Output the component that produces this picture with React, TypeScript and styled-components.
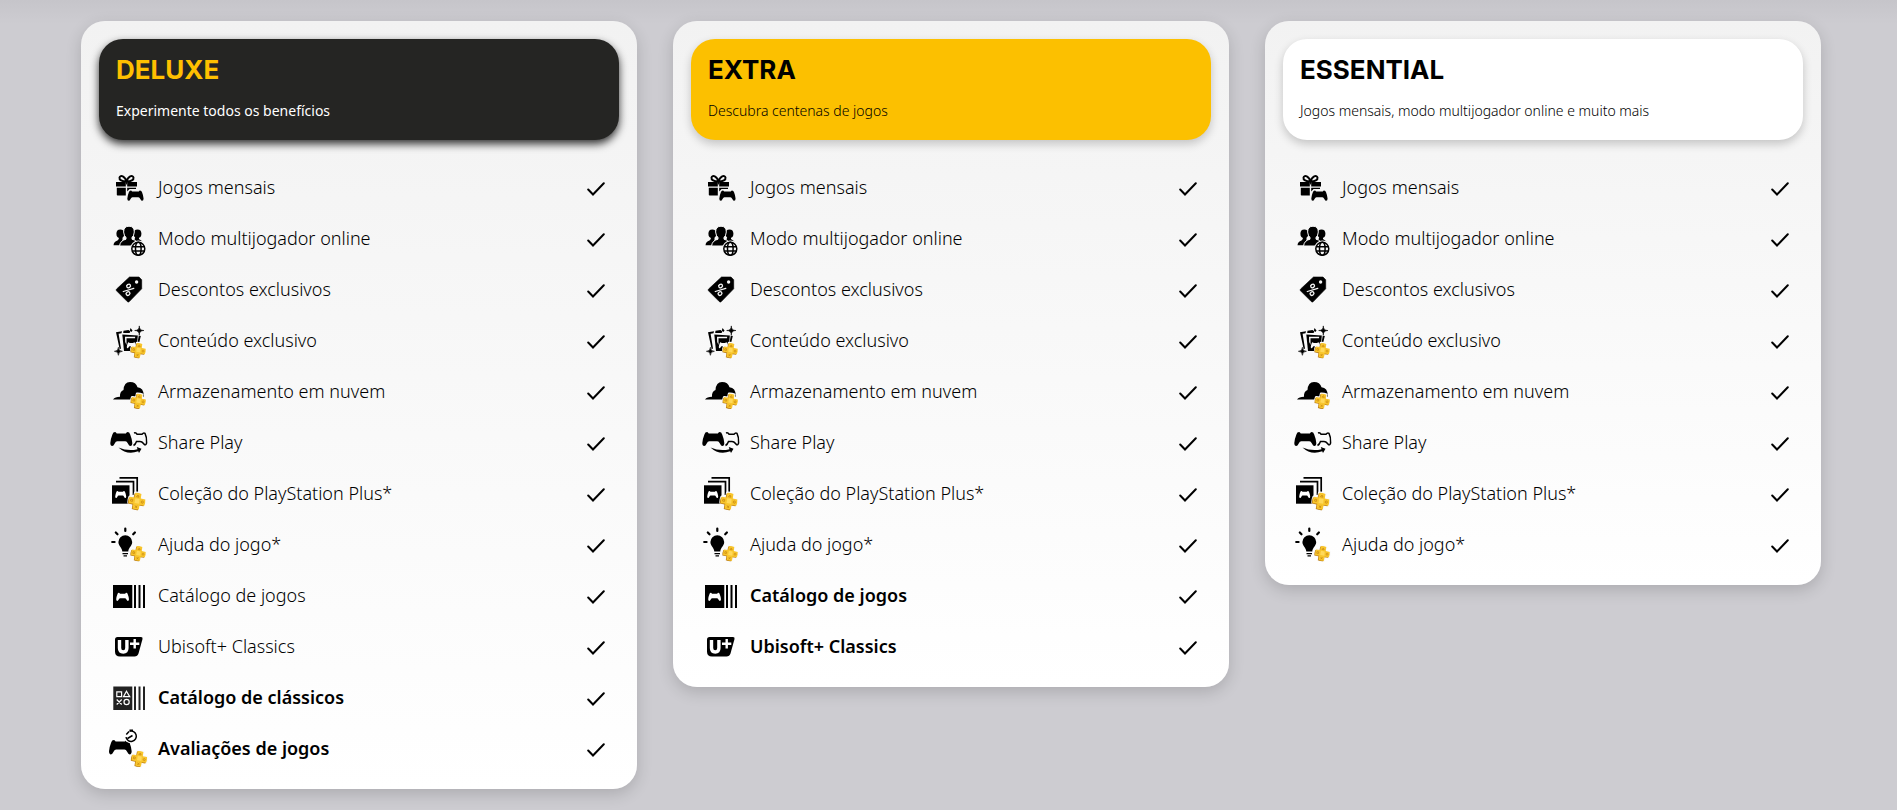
import React from 'react';
import styled, { createGlobalStyle } from 'styled-components';

const GlobalStyle = createGlobalStyle`
  *, *::before, *::after { box-sizing: border-box; }
  body {
    margin: 0;
    min-height: 100vh;
    background: linear-gradient(#c6c5ca 0, #cdccd1 24px);
    background-color: #cdccd1;
    background-repeat: no-repeat;
    font-family: "Noto Sans", "Open Sans", sans-serif;
    color: #000;
  }
`;

const Plans = styled.main`
  display: grid;
  grid-template-columns: repeat(3, 1fr);
  align-items: start;
  gap: 36px;
  padding: 21px 76px 21px 81px;
`;

const Card = styled.section`
  padding: 18px 18px 14px;
  border-radius: 24px;
  background: linear-gradient(#f2f2f2, #fff);
  box-shadow: 0 5px 16px rgba(0, 0, 0, 0.16);
`;

type Tone = 'dark' | 'gold' | 'light';

const tones: Record<Tone, { bg: string; title: string; text: string; weight: number; shadow: string }> = {
  dark: { bg: '#252523', title: '#ffc000', text: '#fff', weight: 400, shadow: '0 4px 8px rgba(0, 0, 0, 0.8)' },
  gold: { bg: '#fcc000', title: '#000', text: '#000', weight: 300, shadow: '0 4px 10px rgba(0, 0, 0, 0.2)' },
  light: { bg: '#fff', title: '#000', text: '#000', weight: 300, shadow: '0 4px 10px rgba(0, 0, 0, 0.2)' },
};

const Banner = styled.header<{ $tone: Tone }>`
  height: 101px;
  padding: 15px 17px;
  border-radius: 24px;
  background: ${p => tones[p.$tone].bg};
  box-shadow: ${p => tones[p.$tone].shadow};

  h2 {
    margin: 0 0 12px;
    font: 700 26px/32px Inter, sans-serif;
    color: ${p => tones[p.$tone].title};
  }

  p {
    margin: 0;
    font-size: 14px;
    line-height: 26px;
    font-weight: ${p => tones[p.$tone].weight};
    color: ${p => tones[p.$tone].text};
  }
`;

const Benefits = styled.ul`
  list-style: none;
  margin: 0;
  padding: 23px 14px 0 9px;
`;

const Benefit = styled.li<{ $strong: boolean }>`
  display: flex;
  align-items: center;
  height: 51px;
  font-size: 18px;
  line-height: 24px;
  font-weight: ${p => (p.$strong ? 600 : 300)};
`;

const Label = styled.span`
  flex: 1;
  margin-left: 9px;
  padding-bottom: 4px;
`;

const Icon = styled.svg`
  flex: none;
  width: 41px;
  height: 41px;
`;

const Tick = styled.svg`
  flex: none;
  width: 18px;
  height: 14px;
`;

const PAD =
  'M4.800 0Q2.800 0 2.100 2.400Q0.400 6.500 0 11Q0 14 1.900 14Q3.200 14 4.400 11.500Q5.400 9.200 7 9.200H15Q16.600 9.200 17.600 11.500Q18.800 14 20.100 14Q22 14 22 11Q21.600 6.500 19.900 2.400Q19.200 0 17.200 0Q16.200 0 15.600 1.500H6.400Q5.800 0 4.800 0Z';

const Pad = ({ x, y, k, fill = '#000' }: { x: number; y: number; k: number; fill?: string }) => (
  <path d={PAD} transform={`translate(${x} ${y}) scale(${k})`} fill={fill} />
);

const CROSS =
  'M-2.900 -7.300Q0 -8 2.900 -7.300L3 -3L7.300 -2.900Q8 0 7.300 2.900L3 3L2.900 7.300Q0 8 -2.900 7.300L-3 3L-7.300 2.900Q-8 0 -7.300 -2.900L-3 -3Z';

const Plus = ({ x, y, k = 1 }: { x: number; y: number; k?: number }) => (
  <g transform={`translate(${x} ${y}) rotate(10) scale(${k})`} strokeLinejoin="round">
    <path d={CROSS} stroke="#fafafa" strokeWidth="2.500" fill="#fafafa" />
    <path d={CROSS} transform="translate(-.6 .7)" fill="#b87a14" />
    <path d={CROSS} fill="#f8c52c" />
    <path d="M-2 -2.500H2L2.500 2H-2Z" fill="#ffd95a" />
    <g fill="none" stroke="#c98a12" strokeWidth=".7">
      <path d="M0 -5.800L1.200 -4H-1.200ZM-1 4.200L1 6.200M1 4.200L-1 6.200M-5.900 -.9H-4.100V.9H-5.900Z" />
      <circle cx="5" cy="0" r="1" />
    </g>
  </g>
);

const star = (x: number, y: number, r: number) =>
  `M${x} ${y - r}Q${x} ${y} ${x + r} ${y}Q${x} ${y} ${x} ${y + r}Q${x} ${y} ${x - r} ${y}Q${x} ${y} ${x} ${y - r}Z`;

const icons = {
  gift: (
    <>
      <path d="M18.500 13.500C17 8 12.500 6.500 11.500 9.500C11 12 14 13.500 18.500 13.500C23 13.500 26 12 25.500 9.500C24.500 6.500 20 8 18.500 13.500Z" fill="none" stroke="#000" strokeWidth="2" />
      <path d="M8 14H17.800V18.500H8ZM19.200 14H29V18.500H19.200ZM8.800 19.800H17.800V27.500H9.600Q8.800 27.500 8.800 26.700ZM19.200 19.800H28V21H21.500L19.200 23.500Z" />
      <Pad x={19.3} y={22.4} k={0.74} />
    </>
  ),
  people: (
    <>
      <ellipse cx="12.300" cy="14.800" rx="3.900" ry="4.300" />
      <ellipse cx="29.500" cy="14.800" rx="3.900" ry="4.300" />
      <path d="M5.500 26.200Q5.800 22.500 9.500 21.500L10.800 20V17H14.500V21L11.500 26.200ZM27.500 17H31V20L34.500 22.500H26Z" />
      <path d="M15.600 13Q15.800 7.200 21 7.200Q26.200 7.200 26.300 13Q26 17 24 18.500V20.200Q30 21.600 30.200 27H11.600Q12 21.600 18 20.200V18.500Q16 17 15.600 13Z" stroke="#f6f6f6" />
      <circle cx="30.300" cy="29.800" r="8.200" fill="#f6f6f6" />
      <g fill="none" stroke="#000" strokeWidth="1.500">
        <circle cx="30.300" cy="29.800" r="6.500" />
        <ellipse cx="30.300" cy="29.800" rx="2.800" ry="6.500" />
        <path d="M24.300 27.700H36.300M24.300 32H36.300" />
      </g>
    </>
  ),
  tag: (
    <>
      <path d="M21.500 7H31L33.700 9.700V18.800L21.300 31.600Q20.300 32.600 19.300 31.600L8.500 20.800Q7.700 19.900 8.600 19Z" stroke="#000" strokeLinejoin="round" strokeWidth=".6" />
      <circle cx="28.600" cy="12" r="1.700" fill="#f7f7f7" />
      <g fill="none" stroke="#f7f7f7" strokeWidth="1.300">
        <path d="M15.300 21.500L25.800 18.300" strokeLinecap="round" />
        <ellipse cx="20.600" cy="16" rx="2" ry="1.700" transform="rotate(-35 20.600 16)" />
        <ellipse cx="20" cy="23.600" rx="2" ry="1.700" transform="rotate(-35 20 23.600)" />
      </g>
    </>
  ),
  exclusive: (
    <>
      <path d="M8 11.200L14 10.200L13.500 12.200L10.600 12.700L13 27.500L11.700 28.300ZM15.500 9.800L20.500 9L22.500 10.500L21.500 12H15.200ZM30.800 14.500L32.800 15L31 22.500L29.500 22Z" />
      <path d="M14.300 13.500L29.800 14.500L28.500 30H16Z" />
      <path d="M17 15.800H27.200L27 17.300H18.500V24L17.200 21Z" fill="#f9f9f9" />
      <Pad x={18.8} y={21.3} k={0.42} fill="#f9f9f9" />
      <path d={star(31.3, 9.5, 4.6) + star(10.4, 30.3, 4)} stroke="#000" strokeWidth=".6" />
      <path d="M22.500 7L24.500 9.500L23.500 11L21.800 9.500Z" />
      <Plus x={30.4} y={29.3} k={0.95} />
    </>
  ),
  cloud: (
    <>
      <path d="M5 27.500Q7 24.800 12 24.800Q11.500 19.500 15.500 18Q16 10 22 10Q28 10 29.500 15.200Q35.500 15.500 36 24L33 27.500Z" />
      <Plus x={30.5} y={29} k={0.95} />
    </>
  ),
  share: (
    <>
      <Pad x={2.3} y={9} k={1} />
      <path d="M26 10Q28 9.300 29 11.200H34Q35.500 9.300 37 10.300Q39 14 38.600 20Q37.500 23.500 35.500 20.500Q34 18.500 32 18.500H28.500Q27.500 21.500 25.500 22.500" fill="none" stroke="#000" strokeWidth="1.500" />
      <path d="M10.500 24.500Q20 28.600 29.500 26.200L28.800 24L33.500 25.700L31 30L30.200 28.300Q19 32.500 10.500 24.500Z" />
    </>
  ),
  collection: (
    <>
      <path d="M4 11.300H21.500V29.700H4Z" />
      <path d="M8 7.600H25.500V21M11.500 3.900H29.200V18" fill="none" stroke="#000" strokeWidth="1.700" />
      <Pad x={7.2} y={17} k={0.5} fill="#fff" />
      <Plus x={29} y={27.2} k={1.08} />
    </>
  ),
  bulb: (
    <>
      <path d="M17.300 10.200A6.900 6.900 0 0 1 24.200 17C24.200 21 20.500 22.500 20.300 26.500H14.300C14.100 22.500 10.400 21 10.400 17A6.900 6.900 0 0 1 17.300 10.200ZM14.500 28H20V29.300H14.500ZM15.500 30.300H19V31.500H15.500Z" />
      <path d="M17.300 3.600V6M7.800 7.500L9.500 9.300M26.900 7.500L25.200 9.300M4.200 17H6.600" stroke="#000" strokeWidth="2.200" strokeLinecap="round" />
      <Plus x={30.4} y={28.4} k={0.95} />
    </>
  ),
  catalog: (
    <>
      <path d="M5 9H24.300V32H5ZM26 9H28V32H26ZM30.500 9H32.500V32H30.500ZM35 9H37V32H35Z" />
      <Pad x={8.2} y={16.8} k={0.58} fill="#fff" />
    </>
  ),
  ubisoft: (
    <>
      <path d="M9.500 10H33Q35 10 34.500 12L30.500 26.500Q29.500 29.500 26.500 29.500H12Q7 29.500 7 24.500V12.500Q7 10 9.500 10Z" />
      <path d="M11.500 13V21Q11.500 25 15.200 25Q18.900 25 18.900 21V13" fill="none" stroke="#fff" strokeWidth="3.400" />
      <path d="M26.700 12V21.500M22 16.700H31.300" stroke="#fff" strokeWidth="2.400" />
    </>
  ),
  classics: (
    <>
      <path d="M5.300 8.500H24.300V32H5.300ZM26 8.500H28V32H26ZM30.500 8.500H32.500V32H30.500ZM35 8.500H37V32H35Z" fill="#222" />
      <g fill="none" stroke="#fff" strokeWidth="1.200">
        <path d="M8.800 13.800H13.600V18.600H8.800ZM18.500 13.300L21.700 18.600H15.500ZM8.700 21.500L13.700 26.500M13.700 21.500L8.700 26.500" />
        <circle cx="18.600" cy="24" r="2.600" />
      </g>
    </>
  ),
  trial: (
    <>
      <Pad x={1} y={11} k={1.03} />
      <circle cx="23" cy="7.200" r="7" fill="#fff" />
      <path d="M21.500 2.300A5.200 5.200 0 1 1 18 8.200M18.300 5.500L21 2.500M21.500 1.300H25M19.500 9.500L24.500 6.500" fill="none" stroke="#000" strokeWidth="1.500" />
      <Plus x={31.3} y={29.7} />
    </>
  ),
};

type IconName = keyof typeof icons;

const benefits: [IconName, string][] = [
  ['gift', 'Jogos mensais'],
  ['people', 'Modo multijogador online'],
  ['tag', 'Descontos exclusivos'],
  ['exclusive', 'Conteúdo exclusivo'],
  ['cloud', 'Armazenamento em nuvem'],
  ['share', 'Share Play'],
  ['collection', 'Coleção do PlayStation Plus*'],
  ['bulb', 'Ajuda do jogo*'],
  ['catalog', 'Catálogo de jogos'],
  ['ubisoft', 'Ubisoft+ Classics'],
  ['classics', 'Catálogo de clássicos'],
  ['trial', 'Avaliações de jogos'],
];

const plans: { name: string; text: string; tone: Tone; count: number; strongFrom: number }[] = [
  { name: 'DELUXE', text: 'Experimente todos os benefícios', tone: 'dark', count: 12, strongFrom: 10 },
  { name: 'EXTRA', text: 'Descubra centenas de jogos', tone: 'gold', count: 10, strongFrom: 8 },
  { name: 'ESSENTIAL', text: 'Jogos mensais, modo multijogador online e muito mais', tone: 'light', count: 8, strongFrom: 8 },
];

export default function App() {
  return (
    <>
      <GlobalStyle />
      <Plans>
        {plans.map(plan => (
          <Card key={plan.name}>
            <Banner $tone={plan.tone}>
              <h2>{plan.name}</h2>
              <p>{plan.text}</p>
            </Banner>
            <Benefits>
              {benefits.slice(0, plan.count).map(([icon, label], i) => (
                <Benefit key={label} $strong={i >= plan.strongFrom}>
                  <Icon viewBox="0 0 41 41" aria-hidden="true">{icons[icon]}</Icon>
                  <Label>{label}</Label>
                  <Tick viewBox="0 0 18 14" aria-hidden="true">
                    <path d="M1.200 7.500L6 12.500L16.800 1.200" fill="none" stroke="#000" strokeWidth="2" strokeLinecap="round" />
                  </Tick>
                </Benefit>
              ))}
            </Benefits>
          </Card>
        ))}
      </Plans>
    </>
  );
}
